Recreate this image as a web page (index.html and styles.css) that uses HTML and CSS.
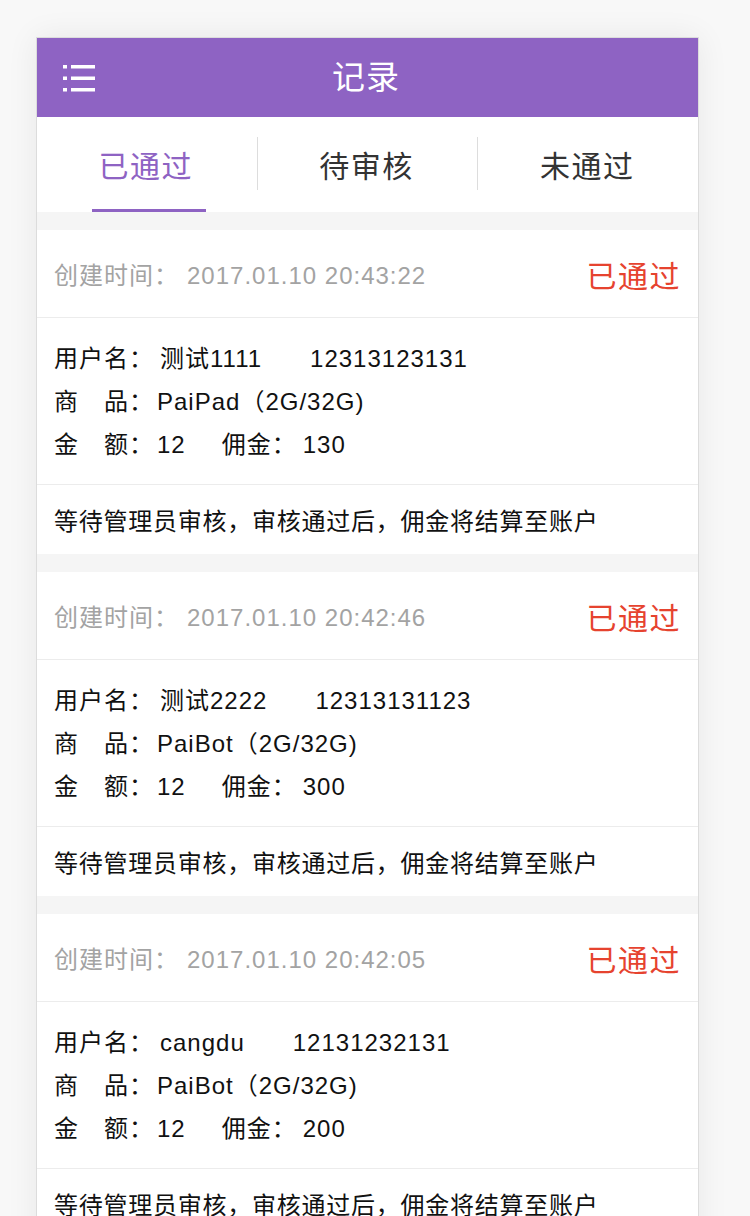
FILE: index.html
```html
<!DOCTYPE html>
<html lang="zh-CN">
<head>
  <meta charset="UTF-8" />
  <meta name="viewport" content="width=device-width, initial-scale=1.0"/>
  <title>记录</title>
  <link rel="stylesheet" href="styles.css">
</head>
<body>
  <div class="page">
    <header class="topbar">
      <div class="topbar-side">
        <svg class="menu-icon" width="32" height="28" viewBox="0 0 32 28">
          <rect x="0" y="1" width="4" height="3.5" fill="#fff"/>
          <rect x="8" y="1" width="24" height="3.5" fill="#fff"/>
          <rect x="0" y="12.5" width="4" height="3.5" fill="#fff"/>
          <rect x="8" y="12.5" width="24" height="3.5" fill="#fff"/>
          <rect x="0" y="24" width="4" height="3.5" fill="#fff"/>
          <rect x="8" y="24" width="24" height="3.5" fill="#fff"/>
        </svg>
      </div>
      <h1 class="topbar-title">记录</h1>
      <div class="topbar-side"></div>
    </header>

    <nav class="tabs">
      <div class="tab active">
        <span class="tab-label">已通过</span>
        <span class="tab-bar"></span>
      </div>
      <span class="tab-sep"></span>
      <div class="tab">
        <span class="tab-label">待审核</span>
        <span class="tab-bar"></span>
      </div>
      <span class="tab-sep"></span>
      <div class="tab">
        <span class="tab-label">未通过</span>
        <span class="tab-bar"></span>
      </div>
    </nav>

    <div class="list">
      <div class="record">
        <div class="record-head">
          <span class="record-time"><span class="time-lbl">创建时间：</span>2017.01.10 20:43:22</span>
          <span class="record-status">已通过</span>
        </div>
        <div class="record-body">
          <p><span class="lbl">用户名：</span>测试1111<span class="phone">12313123131</span></p>
          <p><span class="lbl lbl-short">商　品：</span>PaiPad（2G/32G)</p>
          <p><span class="lbl lbl-short">金　额：</span>12<span class="fee"><span class="lbl">佣金：</span>130</span></p>
        </div>
        <div class="record-foot">等待管理员审核，审核通过后，佣金将结算至账户</div>
      </div>

      <div class="record">
        <div class="record-head">
          <span class="record-time"><span class="time-lbl">创建时间：</span>2017.01.10 20:42:46</span>
          <span class="record-status">已通过</span>
        </div>
        <div class="record-body">
          <p><span class="lbl">用户名：</span>测试2222<span class="phone">12313131123</span></p>
          <p><span class="lbl lbl-short">商　品：</span>PaiBot（2G/32G)</p>
          <p><span class="lbl lbl-short">金　额：</span>12<span class="fee"><span class="lbl">佣金：</span>300</span></p>
        </div>
        <div class="record-foot">等待管理员审核，审核通过后，佣金将结算至账户</div>
      </div>

      <div class="record">
        <div class="record-head">
          <span class="record-time"><span class="time-lbl">创建时间：</span>2017.01.10 20:42:05</span>
          <span class="record-status">已通过</span>
        </div>
        <div class="record-body">
          <p><span class="lbl">用户名：</span>cangdu<span class="phone">12131232131</span></p>
          <p><span class="lbl lbl-short">商　品：</span>PaiBot（2G/32G)</p>
          <p><span class="lbl lbl-short">金　额：</span>12<span class="fee"><span class="lbl">佣金：</span>200</span></p>
        </div>
        <div class="record-foot">等待管理员审核，审核通过后，佣金将结算至账户</div>
      </div>
    </div>
  </div>
</body>
</html>
```

FILE: styles.css
```css
html, body { margin: 0; height: 100%; overflow: hidden; }
body { background: #f8f8f8; padding-top: 37px; font-family: "Liberation Sans", "Noto Sans CJK SC", sans-serif; }

.page { width: 661px; margin-left: 36px; border: 1px solid #dcdcdc; background: #f5f5f5; box-shadow: 0 0 30px rgba(0,0,0,0.07); min-height: 1200px; }

.topbar { height: 79px; background: #8e63c3; display: grid; grid-template-columns: 1fr auto 1fr; align-items: center; }
.topbar-side { display: flex; align-items: center; padding-left: 26px; }
.menu-icon { display: block; }
.topbar-title { margin: 0 0 0 -3px; color: #fff; font-size: 33px; font-weight: normal; line-height: 1; letter-spacing: 1px; }

.tabs { height: 95px; background: #fff; display: flex; margin-bottom: 18px; }
.tab { flex: 1; display: flex; flex-direction: column; align-items: center; }
.tab-label { flex: 1; display: flex; align-items: center; font-size: 30px; letter-spacing: 1.5px; color: #333; padding-top: 2px; margin-left: -2px; }
.tab-bar { width: 114px; height: 3px; margin-left: 4px; }
.tab.active .tab-label { color: #8e63c3; }
.tab.active .tab-bar { background: #8e63c3; }
.tab-sep { width: 1px; height: 53px; margin-top: 20px; background: #dddddd; }

.record { background: #fff; margin-bottom: 18px; }
.record-head { height: 87px; padding: 0 17px 0 17px; display: flex; justify-content: space-between; align-items: center; border-bottom: 1px solid #ececec; }
.record-time { font-size: 24px; letter-spacing: 1px; color: #a3a3a3; }
.time-lbl { margin-right: 8px; }
.record-status { font-size: 30px; letter-spacing: 1.5px; color: #e6432f; }

.record-body { padding: 19px 17px 18px; border-bottom: 1px solid #ececec; }
.record-body p { margin: 0; font-size: 24px; letter-spacing: 1px; line-height: 43px; color: #111; }
.lbl { margin-right: 6px; }
.lbl-short { margin-right: 3px; }
.phone { margin-left: 48px; }
.fee { margin-left: 36px; }

.record-foot { height: 69px; padding: 0 17px; display: flex; align-items: center; font-size: 24px; letter-spacing: 0.75px; color: #111; }
```
